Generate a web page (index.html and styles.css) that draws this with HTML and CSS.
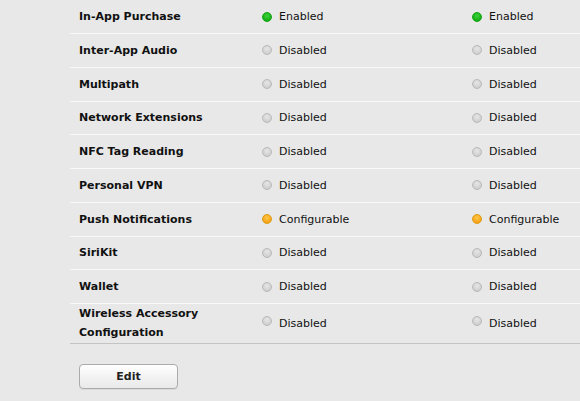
FILE: index.html
```html
<!DOCTYPE html>
<html>
<head>
<meta charset="utf-8">
<link rel="stylesheet" href="styles.css">
</head>
<body>
<div class="page">
  <div class="table">
    <div class="row"><div class="label">In-App Purchase</div><div class="cell"><span class="dot on"></span>Enabled</div><div class="cell"><span class="dot on"></span>Enabled</div></div>
    <div class="row"><div class="label">Inter-App Audio</div><div class="cell"><span class="dot"></span>Disabled</div><div class="cell"><span class="dot"></span>Disabled</div></div>
    <div class="row"><div class="label">Multipath</div><div class="cell"><span class="dot"></span>Disabled</div><div class="cell"><span class="dot"></span>Disabled</div></div>
    <div class="row"><div class="label">Network Extensions</div><div class="cell"><span class="dot"></span>Disabled</div><div class="cell"><span class="dot"></span>Disabled</div></div>
    <div class="row"><div class="label">NFC Tag Reading</div><div class="cell"><span class="dot"></span>Disabled</div><div class="cell"><span class="dot"></span>Disabled</div></div>
    <div class="row"><div class="label">Personal VPN</div><div class="cell"><span class="dot"></span>Disabled</div><div class="cell"><span class="dot"></span>Disabled</div></div>
    <div class="row"><div class="label">Push Notifications</div><div class="cell"><span class="dot conf"></span>Configurable</div><div class="cell"><span class="dot conf"></span>Configurable</div></div>
    <div class="row"><div class="label">SiriKit</div><div class="cell"><span class="dot"></span>Disabled</div><div class="cell"><span class="dot"></span>Disabled</div></div>
    <div class="row"><div class="label">Wallet</div><div class="cell"><span class="dot"></span>Disabled</div><div class="cell"><span class="dot"></span>Disabled</div></div>
    <div class="row row-tall"><div class="label">Wireless Accessory<br>Configuration</div><div class="cell"><span class="dot high"></span>Disabled</div><div class="cell"><span class="dot high"></span>Disabled</div></div>
  </div>
  <div class="actions"><button class="btn">Edit</button></div>
</div>
</body>
</html>
```

FILE: styles.css
```css
html, body {
  margin: 0;
  padding: 0;
  background: #e8e8e8;
}
body {
  font-family: "DejaVu Sans", "Liberation Sans", sans-serif;
  font-size: 11px;
  color: #111;
  width: 580px;
  height: 401px;
  overflow: hidden;
}
.page {
  padding-left: 70px;
  padding-top: 0.25px;
}
.table {
  border-bottom: 1px solid #c4c4c4;
}
.row {
  display: grid;
  grid-template-columns: 184px 210px 1fr;
  align-items: center;
  height: 32.75px;
  padding-left: 9px;
  border-bottom: 1px solid #f8f8f8;
}
.row:last-child {
  border-bottom: none;
  height: 38.5px;
}
.row-tall .label {
  line-height: 19px;
}
.label {
  font-weight: bold;
}
.cell {
  display: flex;
  align-items: center;
}
.dot {
  width: 10px;
  height: 10px;
  border-radius: 50%;
  margin-left: -1px;
  margin-right: 7px;
  box-sizing: border-box;
  border: 1px solid #b9b9b9;
  background: radial-gradient(circle at 50% 35%, #e6e6e6 0%, #d0d0d0 70%, #c4c4c4 100%);
}
.dot.high {
  margin-bottom: 5px;
}
.dot.on {
  border: 1px solid #12a312;
  background: radial-gradient(circle at 50% 35%, #3fd23f 0%, #1ab61a 60%, #10a010 100%);
}
.dot.conf {
  border: 1px solid #e09a10;
  background: radial-gradient(circle at 50% 35%, #ffc84a 0%, #f7a91e 60%, #ea9812 100%);
}
.actions {
  padding: 20px 0 0 9px;
}
.btn {
  width: 99px;
  height: 25px;
  border: 1px solid #ababab;
  border-radius: 4px;
  background: linear-gradient(#ffffff, #f1f1f1 60%, #e9e9e9);
  box-shadow: 0 1px 0 rgba(0,0,0,0.06);
  font-family: "DejaVu Sans", "Liberation Sans", sans-serif;
  font-size: 11px;
  font-weight: bold;
  color: #222;
  padding: 0;
}
```
